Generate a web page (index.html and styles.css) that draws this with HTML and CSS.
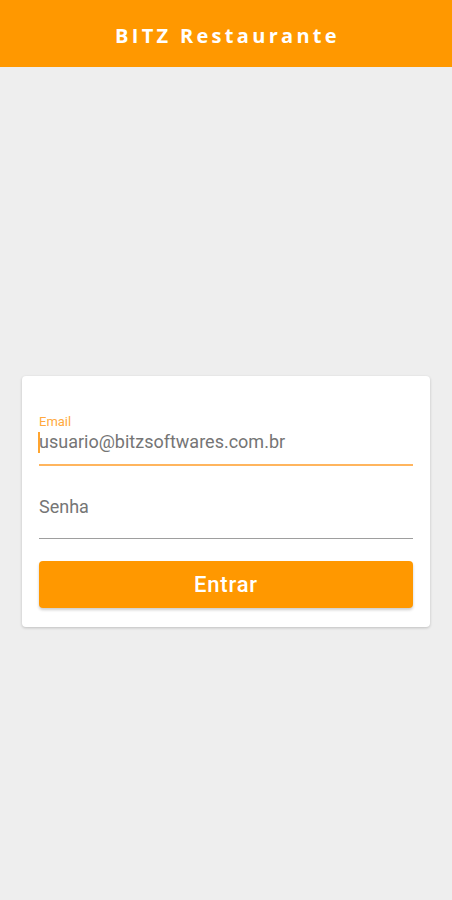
FILE: index.html
```html
<!DOCTYPE html>
<html>
<head>
    <meta charset="UTF-8">
    <meta name="viewport" content="width=device-width, initial-scale=1">
    <title>BITZ Restaurante</title>
    <link rel="stylesheet" href="styles.css">
</head>
<body>
    <header class="topbar">BITZ Restaurante</header>
    <main class="content">
        <form class="login-card">
            <div class="field focused">
                <label class="field-label">Email</label>
                <div class="field-value"><span class="caret"></span>usuario@bitzsoftwares.com.br</div>
            </div>
            <div class="field">
                <div class="field-placeholder">Senha</div>
            </div>
            <button type="button" class="btn-login">Entrar</button>
        </form>
    </main>
</body>
</html>
```

FILE: styles.css
```css
html, body {
    margin: 0;
    padding: 0;
    font-family: Roboto, "Noto Sans", Arial, sans-serif;
    background: #eeeeee;
    color: #212121;
    height: 100%;
}
.topbar {
    height: 67px;
    background: #ff9800;
    color: #fff;
    display: flex;
    align-items: center;
    justify-content: center;
    font-family: "Open Sans", Roboto, Arial, sans-serif;
    font-size: 20px;
    font-weight: 700;
    letter-spacing: 3.3px;
    padding-top: 4px;
    padding-left: 3px;
    box-sizing: border-box;
}
.content {
    padding: 309px 22px 0;
}
.login-card {
    background: #fff;
    border-radius: 4px;
    box-shadow: 0 1px 3px rgba(0, 0, 0, 0.2);
    padding: 41px 17px 19px;
    display: flex;
    flex-direction: column;
}
.field {
    border-bottom: 1px solid #9e9e9e;
    height: 48px;
    position: relative;
}
.field.focused {
    border-bottom: 2px solid #ffb55e;
    height: 47px;
    margin-bottom: 24px;
}
.field-label {
    display: block;
    font-size: 13px;
    color: #ffa940;
    line-height: 13px;
    margin-top: -2px;
}
.field-value {
    font-size: 18px;
    color: #757575;
    line-height: 22px;
    margin-top: 3px;
    position: relative;
}
.caret {
    position: absolute;
    left: -1px;
    top: 1px;
    width: 2px;
    height: 21px;
    background: #ffa530;
}
.field-placeholder {
    font-size: 18px;
    color: #757575;
    line-height: 22px;
    padding-top: 6px;
}
.btn-login {
    margin-top: 22px;
    height: 47px;
    border: 0;
    border-radius: 4px;
    background: #ff9800;
    color: #fff;
    font-family: inherit;
    font-size: 22px;
    font-weight: 500;
    letter-spacing: 0.8px;
    box-shadow: 0 2px 3px rgba(0, 0, 0, 0.2);
}
```
